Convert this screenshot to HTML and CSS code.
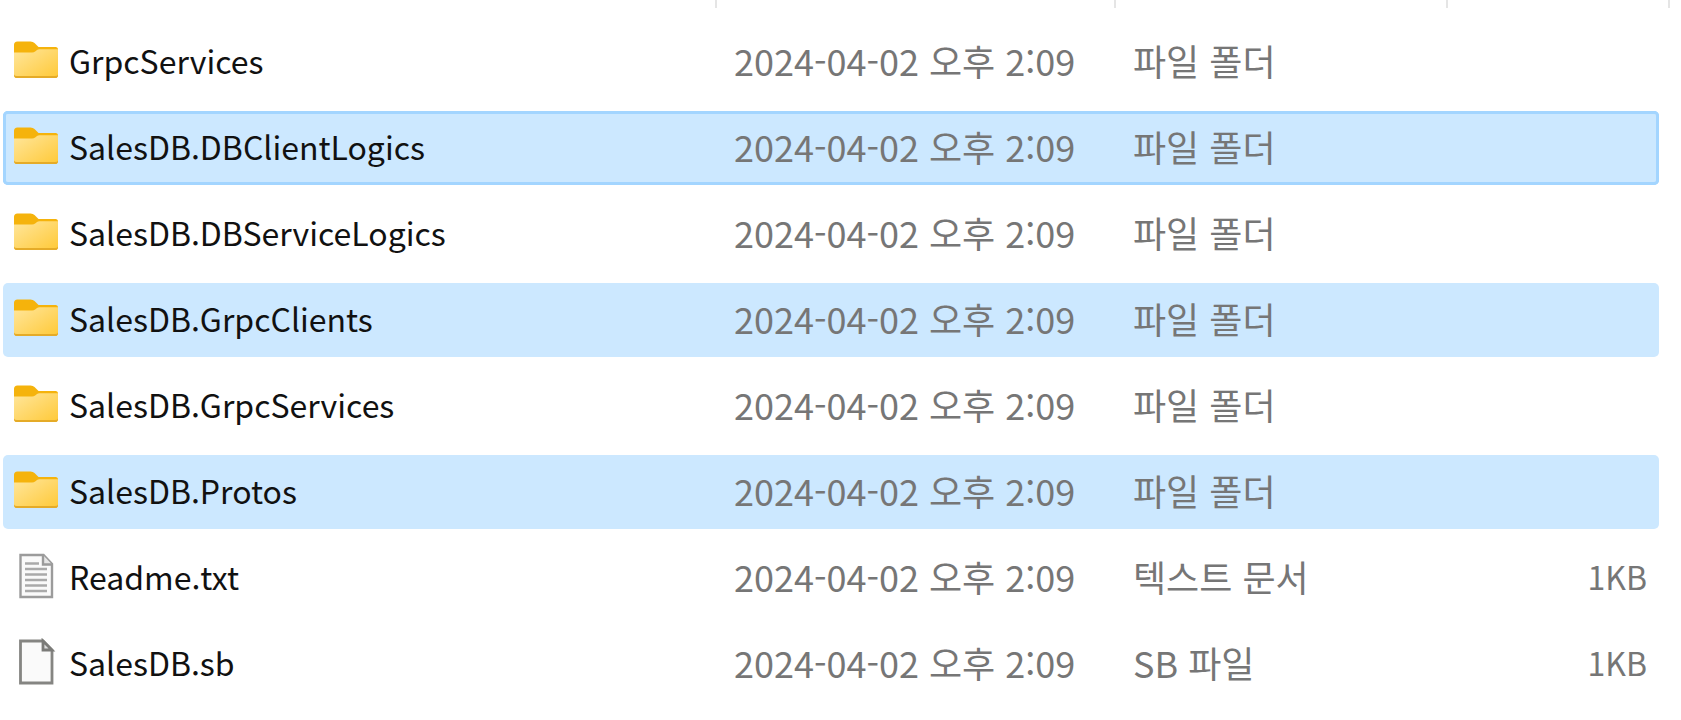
FILE: index.html
```
<!DOCTYPE html>
<html lang="ko">
<head>
<meta charset="utf-8">
<title>SalesDB</title>
<link rel="stylesheet" href="styles.css">
</head>
<body>
<svg class="defs" aria-hidden="true">
  <defs>
    <linearGradient id="face" x1="0" y1="0" x2="1" y2="1">
      <stop offset="0" stop-color="#ffe69c"/>
      <stop offset="1" stop-color="#ffc937"/>
    </linearGradient>
  </defs>
  <symbol id="folder" viewBox="0 0 48 48">
    <path d="M2 9q0-3.500 3.500-3.500h13q2.500 0 4 1.500l4 4h17q2.500 0 2.500 2.500V20H2z" fill="#f5b30c"/>
    <path d="M2 16.500h18q2 0 3.500-1.200l1.500-1.300q1-.8 2.500-.8H46v26q0 2.800-3 2.800H5q-3 0-3-2.800z" fill="url(#face)"/>
    <path d="M2 38.500q.5 1.500 3 1.500h38q2.500 0 3-1.500v.7q0 2.800-3 2.800H5q-3 0-3-2.800z" fill="#e5ab28"/>
  </symbol>
  <symbol id="text-file" viewBox="0 0 48 48">
    <path d="M8.500 3h23l8.500 9v33H8.500z" fill="#fafafa" stroke="#9b9b9b" stroke-width="2.400"/>
    <path d="M31 3v9.500h9" fill="#e6e6e6" stroke="#9b9b9b" stroke-width="2.400"/>
    <path d="M13 11.500h14M13 17h22M13 22.500h22M13 28h22M13 33.500h22M13 39h22" stroke="#aaa" stroke-width="2.400"/>
  </symbol>
  <symbol id="blank-file" viewBox="0 0 48 48">
    <path d="M8.500 3h22.500l9 9v33H8.500z" fill="#fafafa" stroke="#858582" stroke-width="2.800"/>
    <path d="M31 3v9h9z" fill="#ddd" stroke="#7b7b78" stroke-width="2.800"/>
  </symbol>
</svg>
<div class="columns" aria-hidden="true"><span></span><span></span><span></span><span></span></div>
<table class="files">
  <colgroup><col><col class="col-date"><col class="col-type"><col class="col-size"></colgroup>
  <tbody>
    <tr><td><div class="name"><svg class="icon"><use href="#folder"/></svg>GrpcServices</div></td><td>2024-04-02 오후 2:09</td><td>파일 폴더</td><td class="size"></td></tr>
    <tr class="selected focused"><td><div class="name"><svg class="icon"><use href="#folder"/></svg>SalesDB.DBClientLogics</div></td><td>2024-04-02 오후 2:09</td><td>파일 폴더</td><td class="size"></td></tr>
    <tr><td><div class="name"><svg class="icon"><use href="#folder"/></svg>SalesDB.DBServiceLogics</div></td><td>2024-04-02 오후 2:09</td><td>파일 폴더</td><td class="size"></td></tr>
    <tr class="selected"><td><div class="name"><svg class="icon"><use href="#folder"/></svg>SalesDB.GrpcClients</div></td><td>2024-04-02 오후 2:09</td><td>파일 폴더</td><td class="size"></td></tr>
    <tr><td><div class="name"><svg class="icon"><use href="#folder"/></svg>SalesDB.GrpcServices</div></td><td>2024-04-02 오후 2:09</td><td>파일 폴더</td><td class="size"></td></tr>
    <tr class="selected"><td><div class="name"><svg class="icon"><use href="#folder"/></svg>SalesDB.Protos</div></td><td>2024-04-02 오후 2:09</td><td>파일 폴더</td><td class="size"></td></tr>
    <tr><td><div class="name"><svg class="icon"><use href="#text-file"/></svg>Readme.txt</div></td><td>2024-04-02 오후 2:09</td><td>텍스트 문서</td><td class="size">1KB</td></tr>
    <tr><td><div class="name"><svg class="icon"><use href="#blank-file"/></svg>SalesDB.sb</div></td><td>2024-04-02 오후 2:09</td><td>SB 파일</td><td class="size">1KB</td></tr>
  </tbody>
</table>
</body>
</html>
```
FILE: styles.css
```
body {
  margin: 0;
  background: #fff;
  color: #767676;
  font-family: "Noto Sans CJK KR", sans-serif;
  font-size: 36px;
  line-height: 48px;
}

.defs {
  position: absolute;
  width: 0;
  height: 0;
}

.columns {
  display: grid;
  grid-template-columns: 1fr 399px 332px 222px;
  height: 8px;
  padding-right: 11px;
}

.columns span {
  border-right: 2px solid #e5e5e5;
}

.files {
  box-sizing: border-box;
  width: calc(100% - 25px);
  margin: 5px 22px 0 3px;
  table-layout: fixed;
  border-spacing: 0 12px;
}

.col-date { width: 399px; }
.col-type { width: 332px; }
.col-size { width: 212px; }

.files td {
  box-sizing: border-box;
  height: 74px;
  padding: 0 0 4px 18px;
  white-space: nowrap;
  vertical-align: middle;
}

.files td:first-child {
  padding-left: 9px;
  border-radius: 5px 0 0 5px;
}

.files td:last-child {
  border-radius: 0 5px 5px 0;
}

.files .size {
  padding-right: 12px;
  font-size: 32px;
  text-align: right;
}

.name {
  display: flex;
  align-items: center;
  gap: 9px;
  color: #111;
  font-size: 32px;
}

.icon {
  flex: none;
  width: 48px;
  height: 48px;
}

.selected td {
  background: #cce8ff;
}

.focused td {
  box-shadow: inset 0 3px #a3d5ff, inset 0 -3px #a3d5ff;
}

.focused td:first-child {
  box-shadow: inset 0 3px #a3d5ff, inset 0 -3px #a3d5ff, inset 3px 0 #a3d5ff;
}

.focused td:last-child {
  box-shadow: inset 0 3px #a3d5ff, inset 0 -3px #a3d5ff, inset -3px 0 #a3d5ff;
}
```
